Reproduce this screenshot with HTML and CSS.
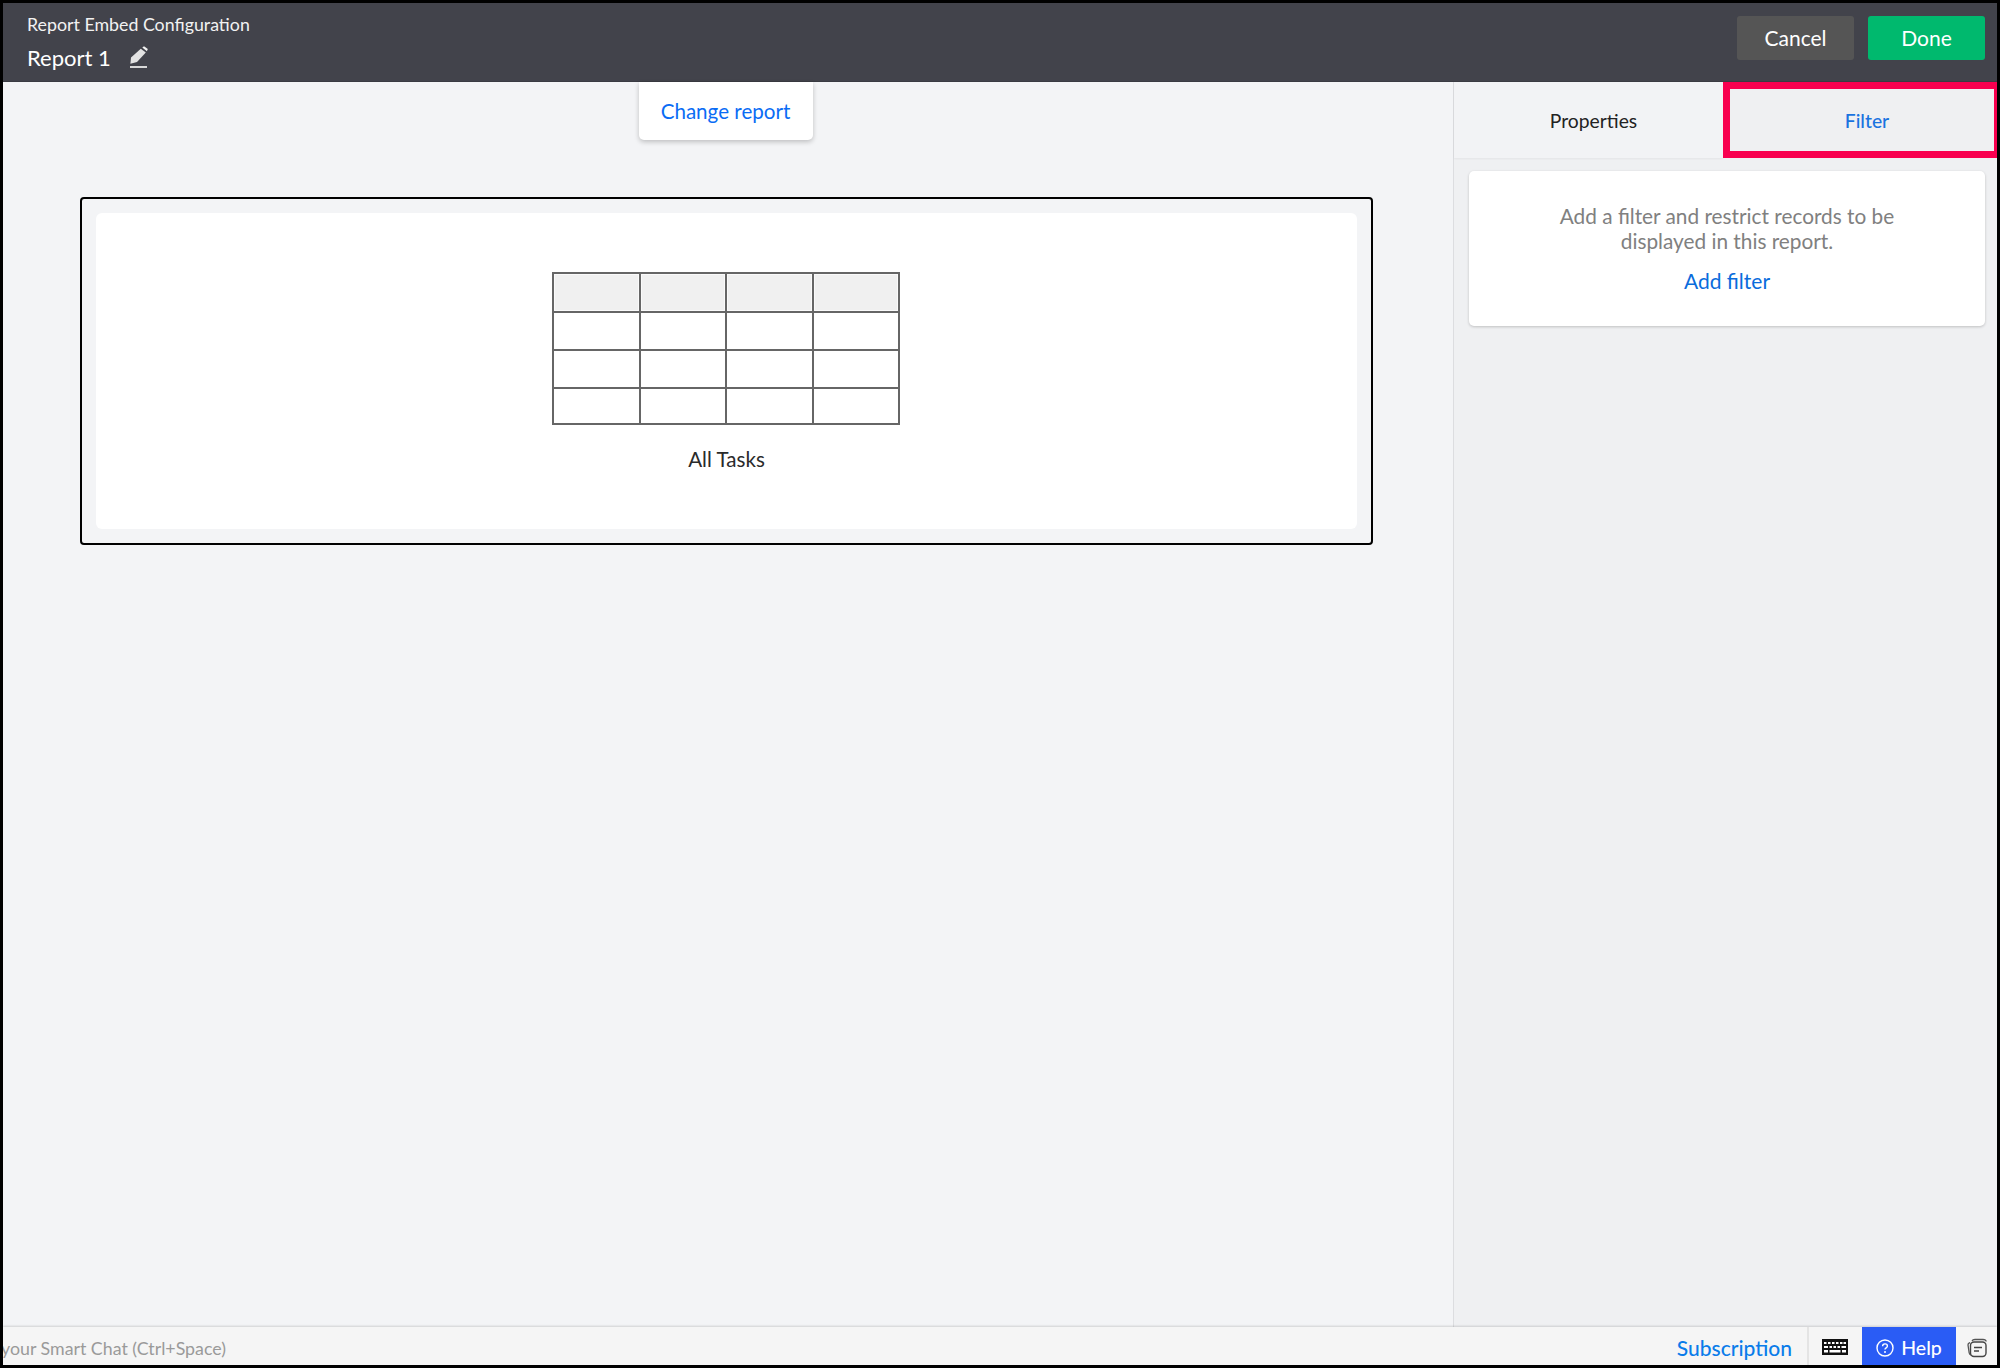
FILE: index.html
```html
<!DOCTYPE html>
<html lang="en">
<head>
    <meta charset="UTF-8">
    <title>Report Embed Configuration</title>
    <link rel="stylesheet" href="styles.css">
</head>
<body>
    <div class="page">
        <div class="header">
            <div class="header-title">
                <div class="header-label">Report Embed Configuration</div>
                <div class="header-name">
                    <span>Report 1</span>
                    <svg class="pencil" width="18" height="22" viewBox="0 0 18 22">
                        <path d="M12.300 1.400L14 .2l3.800 2.800-.9 2.300z" fill="#f2f2f2"/>
                        <path d="M10.800 2.700l5 3.700-8.800 9.700-6.600 1.700.6-6.300z" fill="#e2e2e2"/>
                        <rect x="0" y="20" width="17" height="2" fill="#d8d8d8"/>
                    </svg>
                </div>
            </div>
            <div class="header-actions">
                <button class="btn btn-cancel">Cancel</button>
                <button class="btn btn-done">Done</button>
            </div>
        </div>

        <div class="main">
            <div class="canvas">
                <button class="change-report">Change report</button>
                <div class="report-frame">
                    <div class="report-card">
                        <table class="report-table">
                            <tr class="head"><td></td><td></td><td></td><td></td></tr>
                            <tr class="row"><td></td><td></td><td></td><td></td></tr>
                            <tr class="row"><td></td><td></td><td></td><td></td></tr>
                            <tr class="row last"><td></td><td></td><td></td><td></td></tr>
                        </table>
                        <div class="report-name">All Tasks</div>
                    </div>
                </div>
            </div>

            <div class="sidebar">
                <div class="tabs">
                    <div class="tab">Properties</div>
                    <div class="tab tab-active">Filter</div>
                </div>
                <div class="filter-card">
                    <p>Add a filter and restrict records to be displayed in this report.</p>
                    <a class="add-filter" href="#">Add filter</a>
                </div>
            </div>
        </div>

        <div class="footer">
            <div class="smart-chat">your Smart Chat (Ctrl+Space)</div>
            <a class="subscription" href="#">Subscription</a>
            <div class="keyboard">
                <svg width="26" height="16" viewBox="0 0 26 16">
                    <rect width="26" height="16" fill="#111"/>
                    <path d="M2 3h2.500v2H2zM6 3h2.500v2H6zM10 3h2.500v2H10zM14 3h2.500v2H14zM18 3h2.500v2H18zM21.500 3H24v2h-2.500zM2 7h4v2H2zM7.500 7H10v2H7.500zM11.500 7H14v2h-2.500zM15.500 7H18v2h-2.500zM19.500 7H24v2h-4.500zM2 11h4v2.500H2zM7.500 11h11v2.500h-11zM20 11h4v2.500h-4z" fill="#fff"/>
                </svg>
            </div>
            <button class="help">
                <svg width="18" height="18" viewBox="0 0 18 18">
                    <circle cx="9" cy="9" r="8" fill="none" stroke="#fff" stroke-width="1.400"/>
                    <path d="M6.600 7.200c0-1.400 1-2.300 2.400-2.300s2.400.9 2.400 2.100c0 1.900-2.400 1.800-2.400 3.600" fill="none" stroke="#fff" stroke-width="1.400"/>
                    <circle cx="9" cy="13" r="1" fill="#fff"/>
                </svg>
                Help
            </button>
            <div class="notes">
                <svg width="22" height="20" viewBox="0 0 22 20">
                    <path d="M4 4.500C3 5 1.800 5.500 2 7l1.200 8c.2 1.500 1 2 2 2.200" fill="none" stroke="#555" stroke-width="1.300"/>
                    <path d="M6 3C6.500 1.800 7.500 1.500 9 1.500h8c2 0 3 .6 3.200 2" fill="none" stroke="#555" stroke-width="1.300"/>
                    <rect x="4.500" y="4" width="15.500" height="14.500" rx="3.500" fill="#f5f5f5" stroke="#444" stroke-width="1.400"/>
                    <path d="M8 9.500h8M8 13h5" stroke="#444" stroke-width="1.400"/>
                </svg>
            </div>
        </div>
    </div>
</body>
</html>
```

FILE: styles.css
```css
* {
    margin: 0;
    padding: 0;
    box-sizing: border-box;
    font-family: 'Lato', sans-serif;
}

body {
    background: #000;
}

.page {
    height: 1368px;
    border: 3px solid #000;
    display: flex;
    flex-direction: column;
    overflow: hidden;
    background: #f3f4f6;
}

.header {
    height: 79px;
    flex-shrink: 0;
    background: #42434b;
    border-bottom: 1px solid #3a3b42;
    display: flex;
    justify-content: space-between;
    padding: 13px 12px 0 24px;
}

.header-label {
    color: #f2f2f2;
    font-size: 17.800px;
    line-height: 20px;
    margin-top: -2px;
}

.header-name {
    display: flex;
    align-items: center;
    gap: 19px;
    color: #fff;
    font-size: 22px;
    line-height: 28px;
    margin-top: 10px;
}

.pencil {
    margin-top: -3px;
}

.header-actions {
    display: flex;
    gap: 14px;
}

.btn {
    width: 117px;
    height: 44px;
    border: none;
    border-radius: 3px;
    color: #fff;
    font-size: 21px;
    padding-bottom: 2px;
}

.btn-cancel {
    background: #555555;
}

.btn-done {
    background: #00b96e;
}

.main {
    flex: 1;
    display: flex;
    min-height: 0;
}

.canvas {
    flex: 1;
    display: flex;
    flex-direction: column;
    align-items: center;
    padding: 0 80px 0 77px;
}

.change-report {
    width: 174px;
    height: 58px;
    flex-shrink: 0;
    margin-right: 2px;
    background: #fff;
    border: none;
    border-radius: 0 0 5px 5px;
    box-shadow: 0 2px 5px rgba(0,0,0,0.22);
    color: #0a6cf5;
    font-size: 20.600px;
}

.report-frame {
    width: 100%;
    height: 348px;
    margin-top: 57px;
    border: 2px solid #000;
    border-radius: 4px;
    padding: 14px;
}

.report-card {
    height: 316px;
    background: #fff;
    border-radius: 6px;
    padding-top: 59px;
    display: flex;
    flex-direction: column;
    align-items: center;
}

.report-table {
    width: 348px;
    margin-right: 1px;
    border-collapse: collapse;
    table-layout: fixed;
    border: 2px solid #666;
}

.report-table td {
    border: 2px solid #666;
}

.head {
    height: 39px;
}

.head td {
    background: #f0f0f0;
    box-shadow: inset 0 0 0 1px #fafafa;
}

.row {
    height: 38px;
}

.row.last {
    height: 36px;
}

.report-name {
    margin-top: 22px;
    font-size: 20.600px;
    line-height: 24px;
    color: #2a2a2a;
}

.sidebar {
    width: 544px;
    flex-shrink: 0;
    background: #eff0f2;
    border-left: 1px solid #dcdde0;
}

.tabs {
    display: flex;
    height: 76px;
}

.tab {
    flex: 1;
    display: flex;
    align-items: center;
    justify-content: center;
    background: #f2f3f5;
    box-shadow: 0 1px 2px rgba(0,0,0,0.05);
    color: #222;
    font-size: 19.300px;
    padding-left: 10px;
}

.tab-active {
    flex: 0 0 274px;
    background: #eff0f2;
    border: 7px solid #f8004f;
    border-right-width: 3px;
    box-shadow: none;
    color: #1a73e0;
    font-weight: 500;
    padding-left: 10px;
}

.filter-card {
    margin: 13px 12px 0 15px;
    height: 155px;
    background: #fff;
    border-radius: 5px;
    box-shadow: 0 1px 3px rgba(0,0,0,0.2);
    padding: 32px 60px 0;
    text-align: center;
}

.filter-card p {
    color: #808080;
    font-size: 20.800px;
    line-height: 25px;
}

.add-filter {
    display: block;
    margin-top: 15px;
    color: #0a6cdc;
    font-size: 21px;
    line-height: 25px;
    text-decoration: none;
}

.footer {
    height: 38px;
    flex-shrink: 0;
    background: #f5f5f5;
    box-shadow: 0 -1px 2px rgba(0,0,0,0.15);
    display: flex;
    align-items: center;
}

.smart-chat {
    flex: 1;
    margin-left: -2px;
    padding-top: 3px;
    color: #9a9a9a;
    font-size: 17.800px;
}

.subscription {
    color: #0a7cea;
    font-size: 21px;
    font-weight: 500;
    text-decoration: none;
    padding: 3px 15px 0 0;
}

.keyboard {
    width: 55px;
    height: 100%;
    border-left: 2px solid #e4e4e4;
    padding: 2px 2px 0 0;
    display: flex;
    align-items: center;
    justify-content: center;
}

.help {
    width: 94px;
    height: 100%;
    background: #2a5cf5;
    border: none;
    padding-top: 3px;
    color: #fff;
    font-size: 19.500px;
    font-weight: 500;
    display: flex;
    align-items: center;
    justify-content: center;
    gap: 7px;
}

.notes {
    flex: 0 0 41px;
    padding-top: 3px;
    display: flex;
    align-items: center;
    justify-content: center;
}
```
